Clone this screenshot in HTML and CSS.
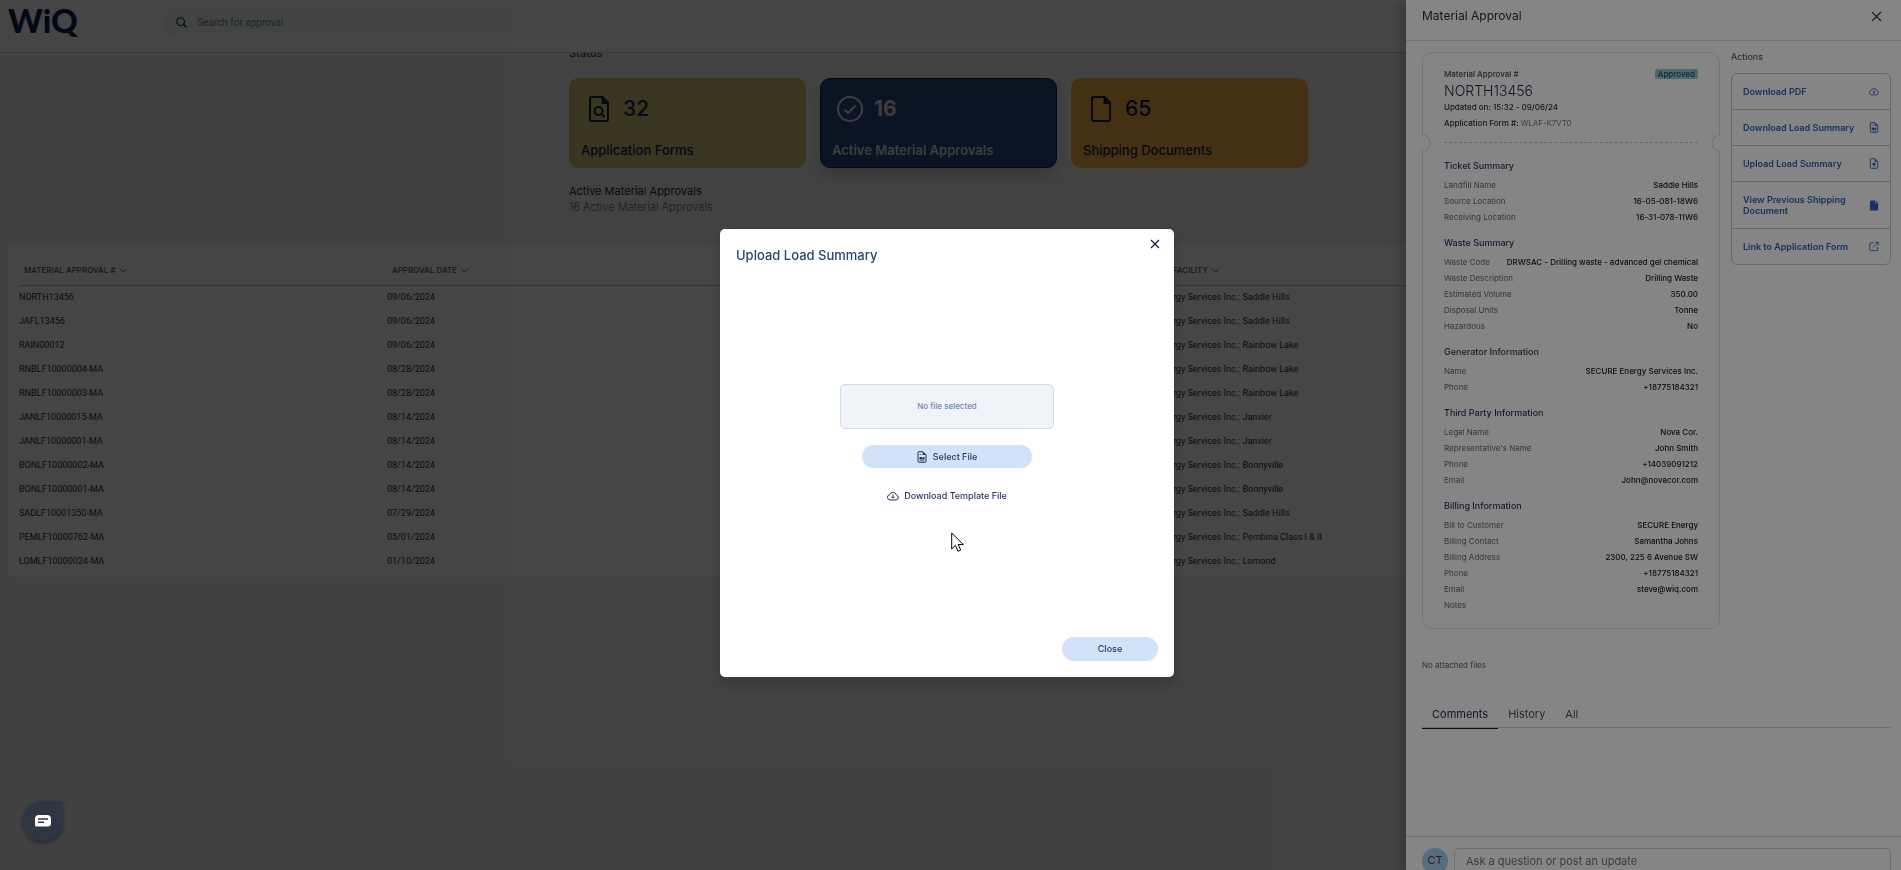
FILE: index.html
```html
<!DOCTYPE html>
<html lang="en">
<head>
<meta charset="utf-8">
<title>WiQ - Material Approvals</title>
<link rel="stylesheet" href="styles.css">
</head>
<body>
<svg class="sprite" aria-hidden="true">
  <symbol id="i-chevron" viewBox="0 0 8 8"><path d="M1 2.500 4 5.500 7 2.500" fill="none" stroke="currentColor" stroke-width=".8"/></symbol>
  <symbol id="i-x" viewBox="0 0 10 10"><path d="M1 1 9 9M9 1 1 9" fill="none" stroke="currentColor" stroke-width="1.200"/></symbol>
  <symbol id="i-cloud" viewBox="0 0 24 20"><path d="M6 18H18a5 5 0 0 0 1-9.800A7.300 7.300 0 0 0 5.200 7.500 5.300 5.300 0 0 0 6 18ZM12 7v7M9 11.300l3 3 3-3" fill="none" stroke="currentColor" stroke-width="2" stroke-linejoin="round"/></symbol>
  <symbol id="i-sheet" viewBox="0 0 20 24"><path d="M2 3a1.500 1.500 0 0 1 1.500-1.500H12L18 7.500V21a1.500 1.500 0 0 1-1.500 1.500h-13A1.500 1.500 0 0 1 2 21Z" fill="none" stroke="currentColor" stroke-width="2"/><path d="M11.500 1.500V8H18ZM5 12h4l2 2 2-2h2v5H5Z" fill="currentColor"/><path d="M5 7h4M5 19.300h10" stroke="currentColor" stroke-width="1.200"/></symbol>
  <symbol id="i-upload" viewBox="0 0 20 24"><path d="M2 3a1.500 1.500 0 0 1 1.500-1.500H12L18 7.500V21a1.500 1.500 0 0 1-1.500 1.500h-13A1.500 1.500 0 0 1 2 21Z" fill="none" stroke="currentColor" stroke-width="2"/><path d="M11.500 1.500V8H18Z" fill="currentColor"/><path d="M10 19v-7M6.500 14.500 10 11l3.500 3.500" fill="none" stroke="currentColor" stroke-width="2.200"/></symbol>
  <symbol id="i-doc" viewBox="0 0 20 24"><path d="M1 3a2 2 0 0 1 2-2h9v6h7v14a2 2 0 0 1-2 2H3a2 2 0 0 1-2-2Z M13.500 1 19 6h-5.500Z" fill="currentColor"/></symbol>
  <symbol id="i-external" viewBox="0 0 24 24"><path d="M11 3H4a2 2 0 0 0-2 2v15a2 2 0 0 0 2 2h15a2 2 0 0 0 2-2v-7M15 2h7v7M22 2 10 14" fill="none" stroke="currentColor" stroke-width="2.200"/></symbol>
</svg>

<header class="topbar">
  <a class="logo" href="#">WiQ</a>
  <label class="search">
    <svg class="search-icon" viewBox="0 0 12 12" aria-hidden="true"><path d="M8.500 8.500 11.500 11.500" stroke="currentColor" stroke-width="1.400"/><circle cx="5" cy="5" r="4.200" fill="none" stroke="currentColor" stroke-width="1.200"/></svg>
    <input type="search" placeholder="Search for approval" aria-label="Search for approval">
  </label>
</header>

<main class="page">
  <section class="summary">
    <h2 class="status-title">Status</h2>
    <div class="cards">
      <button class="card card-forms" type="button">
        <span class="card-top">
          <svg class="card-icon" viewBox="0 0 28 28" aria-hidden="true"><path d="M6.500 2H17.500L23 7.500V24a2 2 0 0 1-2 2H7a2 2 0 0 1-2-2V3.500A1.500 1.500 0 0 1 6.500 2Z" fill="none" stroke="currentColor" stroke-width="2"/><path d="M16.500 1v8H24Z" fill="currentColor"/><circle cx="13.500" cy="16" r="4" fill="none" stroke="currentColor" stroke-width="2"/><path d="M16 18.500 19.500 22" stroke="currentColor" stroke-width="2"/></svg>
          <span class="card-count">32</span>
        </span>
        <span class="card-label">Application Forms</span>
      </button>
      <button class="card card-active" type="button">
        <span class="card-top">
          <svg class="card-icon" viewBox="0 0 28 28" aria-hidden="true"><circle cx="14" cy="14" r="12" fill="none" stroke="currentColor" stroke-width="2"/><path d="M8.500 14.500 12 18 19.500 10.500" fill="none" stroke="currentColor" stroke-width="2"/></svg>
          <span class="card-count">16</span>
        </span>
        <span class="card-label">Active Material Approvals</span>
      </button>
      <button class="card card-shipping" type="button">
        <span class="card-top">
          <svg class="card-icon" viewBox="0 0 28 28" aria-hidden="true"><path d="M6.500 2H17.500L23 7.500V24a2 2 0 0 1-2 2H7a2 2 0 0 1-2-2V3.500A1.500 1.500 0 0 1 6.500 2Z" fill="none" stroke="currentColor" stroke-width="2"/><path d="M16.500 1v8H24Z" fill="currentColor"/></svg>
          <span class="card-count">65</span>
        </span>
        <span class="card-label">Shipping Documents</span>
      </button>
    </div>
    <h1 class="list-title">Active Material Approvals</h1>
    <p class="list-count">16 Active Material Approvals</p>
  </section>

  <section class="table-card">
    <table class="approvals">
      <thead>
        <tr>
          <th>MATERIAL APPROVAL # <svg class="chevron"><use href="#i-chevron"/></svg></th>
          <th>APPROVAL DATE <svg class="chevron"><use href="#i-chevron"/></svg></th>
          <th></th>
          <th>RECEIVING FACILITY <svg class="chevron"><use href="#i-chevron"/></svg></th>
          <th></th>
        </tr>
      </thead>
      <tbody>
        <tr><td>NORTH13456</td><td>09/06/2024</td><td></td><td>SECURE Energy Services Inc.: Saddle Hills</td><td></td></tr>
        <tr><td>JAFL13456</td><td>09/06/2024</td><td></td><td>SECURE Energy Services Inc.: Saddle Hills</td><td></td></tr>
        <tr><td>RAIN00012</td><td>09/06/2024</td><td></td><td>SECURE Energy Services Inc.: Rainbow Lake</td><td></td></tr>
        <tr><td>RNBLF10000004-MA</td><td>08/28/2024</td><td></td><td>SECURE Energy Services Inc.: Rainbow Lake</td><td></td></tr>
        <tr><td>RNBLF10000003-MA</td><td>08/28/2024</td><td></td><td>SECURE Energy Services Inc.: Rainbow Lake</td><td></td></tr>
        <tr><td>JANLF10000015-MA</td><td>08/14/2024</td><td></td><td>SECURE Energy Services Inc.: Janvier</td><td></td></tr>
        <tr><td>JANLF10000001-MA</td><td>08/14/2024</td><td></td><td>SECURE Energy Services Inc.: Janvier</td><td></td></tr>
        <tr><td>BONLF10000002-MA</td><td>08/14/2024</td><td></td><td>SECURE Energy Services Inc.: Bonnyville</td><td></td></tr>
        <tr><td>BONLF10000001-MA</td><td>08/14/2024</td><td></td><td>SECURE Energy Services Inc.: Bonnyville</td><td></td></tr>
        <tr><td>SADLF10001350-MA</td><td>07/29/2024</td><td></td><td>SECURE Energy Services Inc.: Saddle Hills</td><td></td></tr>
        <tr><td>PEMLF10000762-MA</td><td>05/01/2024</td><td></td><td>SECURE Energy Services Inc.: Pembina Class I &amp; II</td><td></td></tr>
        <tr><td>LOMLF10000024-MA</td><td>01/10/2024</td><td></td><td>SECURE Energy Services Inc.: Lomond</td><td></td></tr>
      </tbody>
    </table>
  </section>
</main>

<div class="backdrop"></div>
<aside class="drawer" aria-label="Material Approval">
  <header class="drawer-head">
    <h2>Material Approval</h2>
    <button class="icon-button" type="button" aria-label="Close panel"><svg class="close-large"><use href="#i-x"/></svg></button>
  </header>
  <div class="drawer-body">
    <div class="columns">
      <article class="ticket">
        <div class="ticket-head">
          <div class="ticket-top"><span class="ticket-label">Material Approval #</span><span class="badge">Approved</span></div>
          <h3 class="ticket-number">NORTH13456</h3>
          <p class="ticket-meta">Updated on: 15:32 - 09/06/24</p>
          <p class="ticket-meta">Application Form #: <span class="form-id">WLAF-K7VT0</span></p>
        </div>
        <div class="perforation"></div>
        <section class="facts">
          <h4>Ticket Summary</h4>
          <dl>
            <div><dt>Landfill Name</dt><dd>Saddle Hills</dd></div>
            <div><dt>Source Location</dt><dd>16-05-081-18W6</dd></div>
            <div><dt>Receiving Location</dt><dd>16-31-078-11W6</dd></div>
          </dl>
        </section>
        <section class="facts">
          <h4>Waste Summary</h4>
          <dl>
            <div><dt>Waste Code</dt><dd>DRWSAC - Drilling waste - advanced gel chemical</dd></div>
            <div><dt>Waste Description</dt><dd>Drilling Waste</dd></div>
            <div><dt>Estimated Volume</dt><dd>350.00</dd></div>
            <div><dt>Disposal Units</dt><dd>Tonne</dd></div>
            <div><dt>Hazardous</dt><dd>No</dd></div>
          </dl>
        </section>
        <section class="facts">
          <h4>Generator Information</h4>
          <dl>
            <div><dt>Name</dt><dd>SECURE Energy Services Inc.</dd></div>
            <div><dt>Phone</dt><dd>+18775184321</dd></div>
          </dl>
        </section>
        <section class="facts">
          <h4>Third Party Information</h4>
          <dl>
            <div><dt>Legal Name</dt><dd>Nova Cor.</dd></div>
            <div><dt>Representative's Name</dt><dd>John Smith</dd></div>
            <div><dt>Phone</dt><dd>+14039091212</dd></div>
            <div><dt>Email</dt><dd>John@novacor.com</dd></div>
          </dl>
        </section>
        <section class="facts">
          <h4>Billing Information</h4>
          <dl>
            <div><dt>Bill to Customer</dt><dd>SECURE Energy</dd></div>
            <div><dt>Billing Contact</dt><dd>Samantha Johns</dd></div>
            <div><dt>Billing Address</dt><dd>2300, 225 6 Avenue SW</dd></div>
            <div><dt>Phone</dt><dd>+18775184321</dd></div>
            <div><dt>Email</dt><dd>steve@wiq.com</dd></div>
            <div><dt>Notes</dt><dd></dd></div>
          </dl>
        </section>
      </article>
      <nav class="actions" aria-labelledby="actions-title">
        <h3 id="actions-title">Actions</h3>
        <ul>
          <li><a href="#"><span>Download PDF</span><svg><use href="#i-cloud"/></svg></a></li>
          <li><a href="#"><span>Download Load Summary</span><svg><use href="#i-sheet"/></svg></a></li>
          <li><a href="#"><span>Upload Load Summary</span><svg><use href="#i-upload"/></svg></a></li>
          <li><a href="#"><span>View Previous Shipping Document</span><svg><use href="#i-doc"/></svg></a></li>
          <li><a href="#"><span>Link to Application Form</span><svg><use href="#i-external"/></svg></a></li>
        </ul>
      </nav>
    </div>
    <p class="no-files">No attached files</p>
    <div class="tabs" role="tablist">
      <button class="tab selected" type="button" role="tab" aria-selected="true">Comments</button>
      <button class="tab" type="button" role="tab" aria-selected="false">History</button>
      <button class="tab" type="button" role="tab" aria-selected="false">All</button>
    </div>
  </div>
  <footer class="composer">
    <span class="avatar">CT</span>
    <input type="text" placeholder="Ask a question or post an update" aria-label="Comment">
  </footer>
</aside>

<div class="backdrop modal-layer">
  <div class="modal" role="dialog" aria-modal="true" aria-labelledby="modal-title">
    <div class="modal-head">
      <h2 id="modal-title">Upload Load Summary</h2>
      <button class="icon-button modal-x" type="button" aria-label="Close dialog"><svg class="close-small"><use href="#i-x"/></svg></button>
    </div>
    <div class="modal-body">
      <p class="file-box">No file selected</p>
      <button class="pill pill-wide" type="button"><svg class="file-icon"><use href="#i-sheet"/></svg>Select File</button>
      <a class="template-link" href="#"><svg class="cloud-icon"><use href="#i-cloud"/></svg>Download Template File</a>
    </div>
    <div class="modal-foot"><button class="pill" type="button">Close</button></div>
  </div>
</div>

<button class="chat" type="button" aria-label="Open chat">
  <svg viewBox="0 0 16 12" aria-hidden="true"><path d="M4 0H12a4 4 0 0 1 4 4V8a3.500 3.500 0 0 1-3.500 3.500H1.500A1.500 1.500 0 0 1 0 10V4a4 4 0 0 1 4-4Z" fill="#fff"/><path d="M3 4h10M3 7.300h6" stroke="#2d3643" stroke-width="1.400"/></svg>
</button>
<svg class="cursor" viewBox="0 0 13 20" aria-hidden="true"><path d="M.7 1V17L4.400 13.500 7 19.300 9.700 18 7.200 12.500H12.300Z" fill="#fff" stroke="#000" stroke-width="1"/></svg>
</body>
</html>
```

FILE: styles.css
```css
* { box-sizing: border-box; }
body {
  margin: 0;
  height: 100vh;
  overflow: hidden;
  background: #f0f0f0;
  color: #1c2740;
  font-family: Inter, "Liberation Sans", sans-serif;
  font-size: 9px;
  line-height: 16px;
}
h1, h2, h3, h4, p, ul, dl, dd { margin: 0; padding: 0; font-weight: 400; }
ul { list-style: none; }
button { border: 0; background: none; padding: 0; font: inherit; color: inherit; text-align: left; }
a { color: inherit; text-decoration: none; }
input { font: inherit; border: 0; background: none; outline: 0; min-width: 0; }
.sprite { display: none; }

/* Top bar */
.topbar {
  position: sticky;
  top: 0;
  z-index: 1;
  display: flex;
  align-items: flex-start;
  height: 53px;
  padding: 6px 32px 0 8px;
  background: #fff;
  border-bottom: 1px solid #b2d2dc;
}
.logo {
  width: 156px;
  font: 900 33px/28px Lato, Inter, sans-serif;
  color: #0b1e50;
}
.search {
  flex: 1;
  display: flex;
  align-items: center;
  gap: 10px;
  height: 32px;
  padding: 0 12px;
  border-radius: 16px;
  background: #eef9f5;
}
.search-icon { width: 11px; height: 11px; color: #0b1e50; }
.search input { flex: 1; height: 20px; padding: 0; font-family: Roboto, sans-serif; font-size: 10px; }
.search input::placeholder { color: #7a857e; opacity: 1; }

/* Status cards */
.page { padding: 0 32px 0 8px; margin-top: -16px; }
.summary { max-width: 739px; margin: 0 auto; }
.status-title { font-size: 11px; line-height: 16px; padding-top: 8px; font-weight: 500; color: #3c465c; }
.cards { display: grid; grid-template-columns: repeat(3, 1fr); gap: 14px; margin-top: 17px; }
.card {
  display: flex;
  flex-direction: column;
  gap: 18px;
  height: 90px;
  padding: 17px 12px 0;
  border-radius: 10px;
  color: #0b1e50;
}
.card-forms { background: #cfc076; }
.card-active {
  background: #254b86;
  color: #ddd;
  border: 1px solid #10224e;
  padding: 16px 11px 0;
  box-shadow: 0 8px 16px rgba(20, 50, 60, .2);
}
.card-shipping { background: #f8b445; }
.card-top { display: flex; align-items: center; gap: 10px; padding-left: 4px; }
.card-icon { width: 28px; height: 28px; }
.card-count { font-size: 21px; line-height: 28px; font-weight: 500; }
.card-label { font-size: 13px; line-height: 18px; font-weight: 500; }
.card-active .card-count { font-weight: 700; }
.card-active .card-label { font-weight: 600; }
.list-title { margin-top: 15px; font-size: 11px; color: #1c2740; }
.list-count { font-size: 11px; font-weight: 300; color: #5e6873; }

/* Approvals table */
.table-card { margin-top: 30px; padding: 11px 10px 4px 11px; border-radius: 7px; background: #fff; }
.approvals { width: 100%; table-layout: fixed; border-collapse: collapse; font-family: Roboto, sans-serif; }
.approvals th {
  height: 29px;
  padding: 0 5px;
  border-bottom: 1px solid #a5c4cf;
  text-align: left;
  font: 500 8px/16px Inter, sans-serif;
  color: #4a5468;
}
.approvals td { height: 24px; padding: 0; white-space: nowrap; }
.chevron { width: 9px; height: 9px; margin-left: 1px; vertical-align: -2px; }

/* Layers */
.backdrop { position: fixed; inset: 0; z-index: 2; background: rgba(0, 0, 0, .48); }

/* Detail drawer */
.drawer {
  position: fixed;
  inset: 0 0 0 auto;
  z-index: 3;
  width: 495px;
  display: flex;
  flex-direction: column;
  background: #fff;
  box-shadow: -4px 0 12px rgba(0, 0, 0, .2);
}
.drawer-head {
  display: flex;
  justify-content: space-between;
  height: 41px;
  padding: 6px 19px 0 16px;
  border-bottom: 1px solid #dcdcdc;
}
.drawer-head h2 { font-size: 12px; line-height: 20px; }
.icon-button { display: flex; align-items: center; justify-content: center; height: 20px; }
.close-large { width: 11px; height: 11px; }
.close-small { width: 10px; height: 10px; }
.drawer-body { flex: 1; padding: 11px 10px 0 16px; }
.columns { display: flex; gap: 11px; align-items: flex-start; }
.ticket { flex: 1; min-width: 0; padding: 13px 21px 15px; border: 1px solid #dcdfe4; border-radius: 10px; font-size: 8px; }
.ticket-top { display: flex; justify-content: space-between; align-items: center; }
.ticket-label { font-weight: 500; color: #3c465c; }
.badge { padding: 0 3px; border-radius: 2px; background: #8fccd6; color: #2c4854; line-height: 10px; font-weight: 500; }
.ticket-number { font-size: 14px; line-height: 17px; font-weight: 300; }
.ticket-meta { font-weight: 500; }
.form-id { font-weight: 300; color: #4a5468; }
.perforation {
  position: relative;
  height: 16px;
  margin: 4px -22px 7px;
}
.perforation::before {
  content: "";
  position: absolute;
  inset: 7px 22px auto;
  border-top: 1px dashed #c4c8d4;
}
.perforation::after {
  content: "";
  position: absolute;
  inset: 0;
  background:
    radial-gradient(circle at 0 8px, #fff 7px, #d8dbe0 8px, transparent 9px),
    radial-gradient(circle at 100% 8px, #fff 7px, #d8dbe0 8px, transparent 9px);
}
.facts { margin-bottom: 10px; }
.facts h4 { margin-bottom: 3px; font-size: 9px; line-height: 16px; font-weight: 500; color: #1f3258; }
.facts dl div { display: flex; justify-content: space-between; height: 16px; }
.facts dt { color: #5e6776; }
.facts dd { font-weight: 500; color: #10151f; }
.facts:last-child { margin-bottom: 0; }
.actions { width: 160px; }
.actions h3 { margin-top: -3px; font-size: 9px; color: #3c4454; }
.actions ul { margin-top: 8px; border: 1px solid #bcc8dc; border-radius: 6px; }
.actions li + li { border-top: 1px solid #bcc8dc; }
.actions a {
  display: flex;
  justify-content: space-between;
  align-items: center;
  padding: 12px 11px;
  line-height: 11px;
  font-weight: 600;
  color: #2c62b5;
}
.actions span { max-width: 120px; }
.actions svg { width: 10px; height: 11px; flex: none; }
.no-files { margin-top: 28px; font-size: 8px; color: #5a6070; }
.tabs { display: flex; margin-top: 33px; border-bottom: 1px solid #d2d4d8; font-size: 11px; color: #4a5060; }
.tab { height: 23px; margin-bottom: -2px; padding: 0 10px 7px; }
.tab.selected { border-bottom: 1px solid #0a1a4a; color: #1c2740; }
.composer { display: flex; gap: 6px; height: 34px; padding: 11px 10px 0 16px; border-top: 1px solid #cfcfcf; }
.avatar { flex: none; width: 26px; height: 26px; border-radius: 50%; background: #a8cfee; color: #3c465c; text-align: center; line-height: 25px; font-size: 11px; }
.composer input { flex: 1; height: 40px; padding: 0 11px 15px; border: 1px solid #d2d4d8; border-radius: 5px; font-size: 11px; }
.composer input::placeholder { color: #6c7488; opacity: 1; }

/* Upload dialog */
.modal-layer { z-index: 4; display: flex; align-items: center; justify-content: center; padding: 36px 7px 0 0; }
.modal {
  display: flex;
  flex-direction: column;
  width: 454px;
  height: 448px;
  padding: 16px;
  border-radius: 5px;
  background: #fff;
  box-shadow: 0 6px 16px rgba(0, 0, 0, .2);
  color: #1f355c;
}
.modal-head { display: flex; justify-content: space-between; }
.modal-head h2 { font-size: 13px; line-height: 20px; font-weight: 500; color: #284670; }
.modal-x { align-self: flex-start; width: 12px; height: 12px; margin: -7px -3px 0 0; color: #12203c; }
.modal-body { flex: 1; display: flex; flex-direction: column; align-items: center; justify-content: center; padding-bottom: 14px; }
.file-box {
  width: 214px;
  padding: 13px 0 14px;
  border: 1px solid #d3dce8;
  border-radius: 5px;
  background: #f0f4f9;
  text-align: center;
  font-size: 8px;
  font-weight: 500;
  color: #7288ac;
}
.pill {
  display: flex;
  align-items: center;
  justify-content: center;
  gap: 6px;
  width: 96px;
  height: 24px;
  border-radius: 12px;
  background: #d2e2f9;
  font-weight: 500;
}
.pill-wide { width: 170px; height: 23px; margin: 16px 0 20px; }
.file-icon { width: 10px; height: 12px; }
.cloud-icon { width: 12px; height: 10px; }
.template-link { display: flex; align-items: center; gap: 5px; font-weight: 500; }
.modal-foot { display: flex; justify-content: flex-end; }

/* Floating items */
.chat {
  position: fixed;
  left: 23px;
  bottom: 29px;
  z-index: 5;
  display: flex;
  align-items: center;
  justify-content: center;
  width: 40px;
  height: 40px;
  border-radius: 20px 4px 20px 20px;
  background: #2d3643;
  box-shadow: 0 2px 4px rgba(0, 0, 0, .4);
}
.chat svg { width: 16px; height: 12px; }
.cursor { position: fixed; left: 951px; top: 532px; z-index: 6; width: 13px; height: 20px; }
```
